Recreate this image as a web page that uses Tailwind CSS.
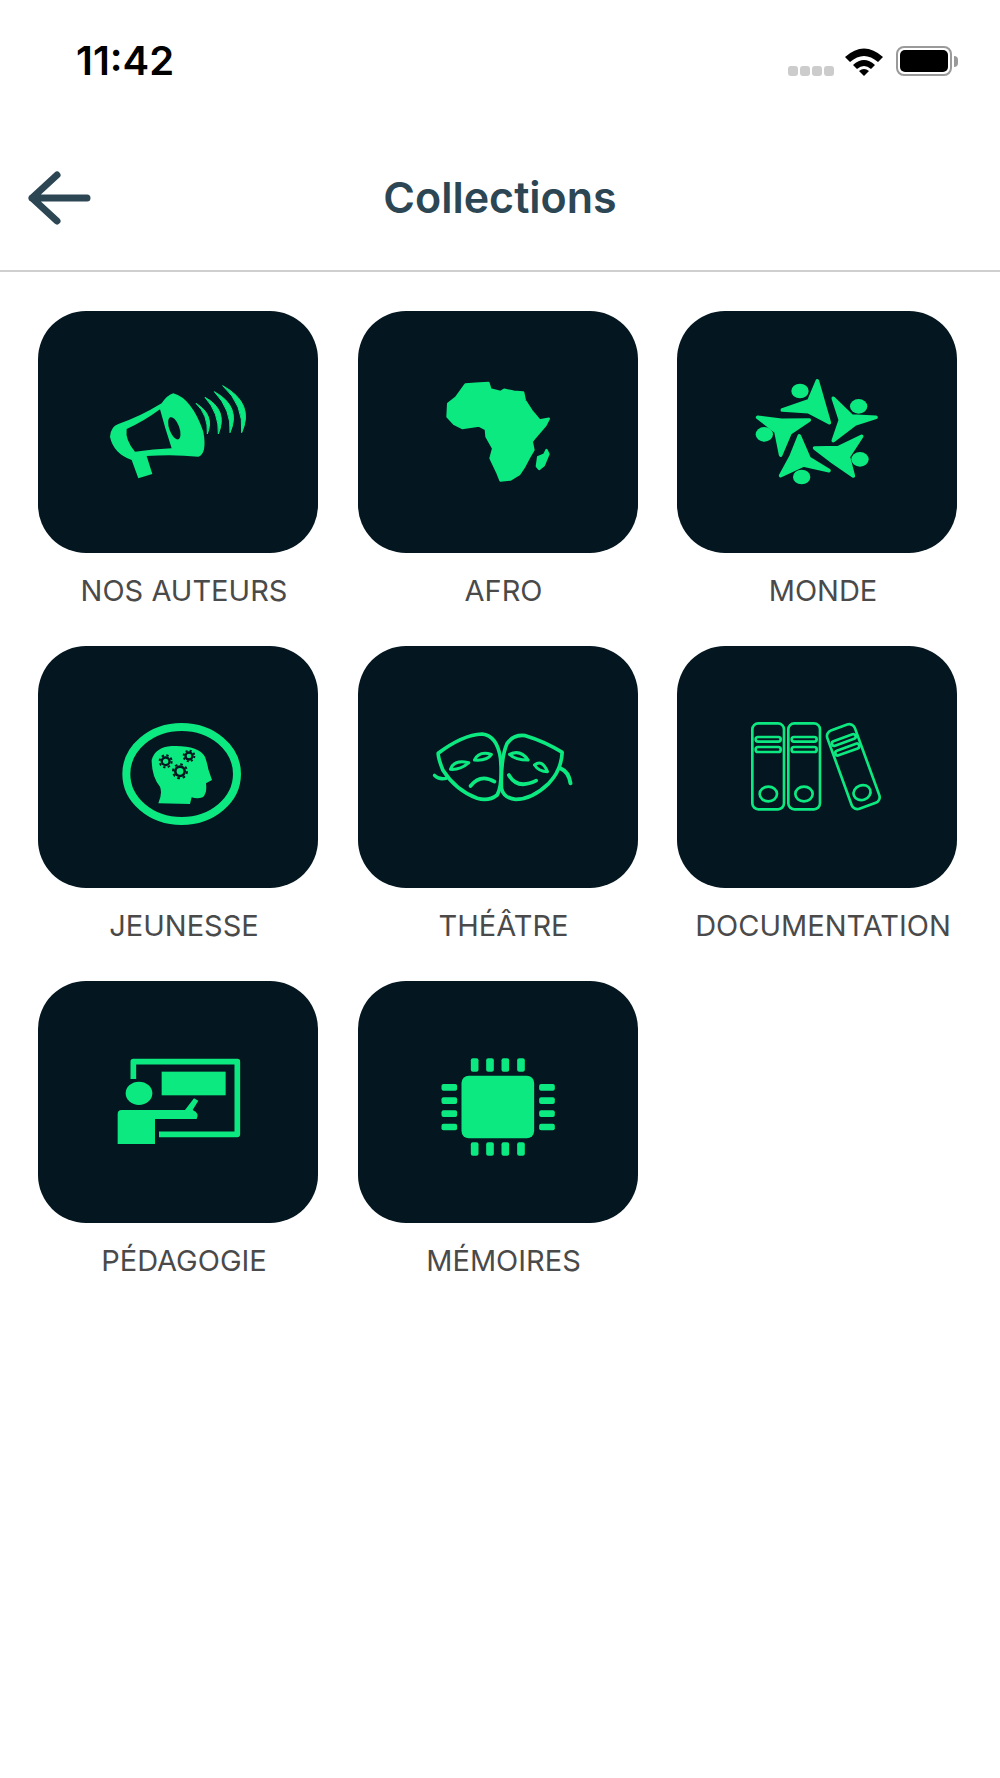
<!DOCTYPE html>
<html lang="fr">
<head>
    <meta charset="UTF-8">
    <meta name="viewport" content="width=device-width, initial-scale=1.0">
    <title>Collections</title>
    <script src="https://cdn.jsdelivr.net/npm/@tailwindcss/browser@4"></script>
</head>
<body class="bg-white font-['Inter',sans-serif]">
<div class="w-[1000px] h-[1778px] bg-white overflow-hidden">

    <!-- status bar -->
    <div class="h-[110px] flex justify-between pl-[76px] pr-[42px] pt-[36px]">
        <span class="text-[40px] leading-[50px] font-semibold text-black">11:42</span>
        <div class="flex items-start h-[40px] pt-[10px]">
            <div class="flex gap-[2px] mt-[20px] mr-[10px]">
                <span class="w-[10px] h-[10px] rounded-[3px] bg-[#cccccc]"></span>
                <span class="w-[10px] h-[10px] rounded-[3px] bg-[#cccccc]"></span>
                <span class="w-[10px] h-[10px] rounded-[3px] bg-[#cccccc]"></span>
                <span class="w-[10px] h-[10px] rounded-[3px] bg-[#cccccc]"></span>
            </div>
            <svg class="w-[40px] h-[30px] mr-[12px]" viewBox="0 0 40 30">
                <path d="M1,11 Q20,-6 39,11 L34,16 Q20,4 6,16 Z" fill="#000"/>
                <path d="M9,19 Q20,9 31,19 L27,23 Q20,17 13,23 Z" fill="#000"/>
                <path d="M15,25 Q20,21 25,25 L20,30 Z" fill="#000"/>
            </svg>
            <div class="w-[56px] h-[30px] rounded-[8px] border-2 border-[#9a9a9a] p-[2px]">
                <div class="w-full h-full rounded-[5px] bg-black"></div>
            </div>
            <span class="w-[4px] h-[11px] mt-[10px] ml-[2px] rounded-r-full bg-[#9a9a9a]"></span>
        </div>
    </div>

    <!-- header -->
    <div class="h-[162px] grid grid-cols-[1fr_auto_1fr] items-center border-b-2 border-[#cfcfcf] pl-[26px] pt-[13px]">
        <svg class="w-[68px] h-[58px] mt-[3px]" viewBox="0 0 68 58" fill="none" stroke="#2c4654" stroke-width="7" stroke-linecap="round" stroke-linejoin="round">
            <path d="M31,6 L6,29 L31,52 M6,29 H61"/>
        </svg>
        <h1 class="text-[43px] leading-[52px] font-semibold text-[#2c4654] pr-[26px]">Collections</h1>
        <div></div>
    </div>

    <!-- collections grid -->
    <div class="grid grid-cols-[repeat(3,280px)] gap-x-[39.5px] gap-y-[37px] pl-[38px] pt-[39px]">

        <div>
            <div class="h-[242px] rounded-[48px] bg-[#04161f]">
                <svg class="w-full h-full" viewBox="38 311 280 242">
                    <g transform="translate(90 360) scale(.3333)" fill="#0de981">
                        <path fill-rule="evenodd" d="M250,100 Q305,115 340,215 Q352,280 325,290 Q250,282 170,288 L187,342 L145,355 L125,300 Q70,280 60,230 Q62,200 85,192 Q150,170 215,130 Q232,105 250,100 Z M110,207 Q105,240 135,275 Q190,268 245,265 Q225,205 210,148 Q160,185 110,207 Z"/>
                        <ellipse cx="253" cy="205" rx="15" ry="35" transform="rotate(-20 253 205)" fill="#04161f"/>
                        <g stroke="#0de981" stroke-width="3" stroke-linejoin="round">
                            <path d="M318,130 Q375,165 352,222 Q355,165 318,130 Z"/>
                            <path d="M345,112 Q415,150 385,222 Q388,160 345,112 Z"/>
                            <path d="M373,95 Q455,140 420,218 Q425,150 373,95 Z"/>
                            <path d="M398,77 Q495,130 455,218 Q462,135 398,77 Z"/>
                        </g>
                    </g>
                </svg>
            </div>
            <p class="mt-[20px] pl-[12px] text-center text-[29px] leading-[36px] text-[#4a4a4a]">NOS AUTEURS</p>
        </div>

        <div>
            <div class="h-[242px] rounded-[48px] bg-[#04161f]">
                <svg class="w-full h-full" viewBox="357.5 311 280 242">
                    <g transform="translate(420 360) scale(.3333)" fill="#0de981" stroke="#0de981" stroke-width="7" stroke-linejoin="round">
                        <path d="M135,73 L165,71 L204,69 L210,88 L240,96 L251,89 L280,95 L308,97 L313,121 L333,152 L357,181 L385,176 L375,196 L343,233 L334,245 L339,270 L325,294 L312,319 L296,343 L269,359 L240,362 L231,339 L210,295 L218,265 L198,230 L196,208 L176,197 L125,204 L101,192 L81,170 L83,131 L107,112 Z"/>
                        <path d="M378,270 L384,282 L370,316 L356,327 L349,319 L353,291 L371,284 Z"/>
                    </g>
                </svg>
            </div>
            <p class="mt-[20px] pl-[12px] text-center text-[29px] leading-[36px] text-[#4a4a4a]">AFRO</p>
        </div>

        <div>
            <div class="h-[242px] rounded-[48px] bg-[#04161f]">
                <svg class="w-full h-full" viewBox="677 311 280 242">
                    <g transform="translate(740 360) scale(.3333)" fill="#0de981" stroke="#0de981" stroke-width="11" stroke-linejoin="round">
                        <path d="M232,63 L268,188 L205,155 L127,150 L207,122 Z"/>
                        <path d="M280,115 L335,168 L408,172 L345,192 L280,242 L301,180 Z"/>
                        <path d="M365,229 L325,290 L340,348 L280,307 L224,264 L295,263 Z"/>
                        <path d="M178,228 L207,295 L267,332 L190,315 L122,347 L153,290 Z"/>
                        <path d="M53,172 L125,181 L208,180 L150,219 L122,285 L108,215 Z"/>
                        <g stroke="none">
                            <ellipse cx="180" cy="93" rx="26" ry="22"/>
                            <ellipse cx="356" cy="139" rx="26" ry="22"/>
                            <ellipse cx="360" cy="298" rx="26" ry="22"/>
                            <ellipse cx="185" cy="351" rx="26" ry="22"/>
                            <ellipse cx="73" cy="223" rx="26" ry="22"/>
                        </g>
                    </g>
                </svg>
            </div>
            <p class="mt-[20px] pl-[12px] text-center text-[29px] leading-[36px] text-[#4a4a4a]">MONDE</p>
        </div>

        <div>
            <div class="h-[242px] rounded-[48px] bg-[#04161f]">
                <svg class="w-full h-full" viewBox="38 646 280 242">
                    <g transform="translate(110 710) scale(.3333)" fill="#0de981">
                        <ellipse cx="215" cy="192" rx="166" ry="141" fill="none" stroke="#0de981" stroke-width="24"/>
                        <path d="M145,280 Q158,250 150,230 Q125,200 125,150 Q135,112 185,108 Q265,105 285,140 Q292,160 295,178 L306,210 L288,220 Q292,250 278,262 Q262,268 245,262 L240,282 Z"/>
                        <g fill="#04161f">
                            <circle cx="167" cy="154" r="15"/>
                            <circle cx="237" cy="138" r="14"/>
                            <circle cx="210" cy="184" r="18"/>
                        </g>
                        <g fill="none" stroke="#04161f" stroke-width="6">
                            <circle cx="167" cy="154" r="18" stroke-dasharray="7 7.1"/>
                            <circle cx="237" cy="138" r="16" stroke-dasharray="6 6.6"/>
                            <circle cx="210" cy="184" r="21" stroke-dasharray="8 8.5"/>
                        </g>
                        <circle cx="167" cy="154" r="8"/>
                        <circle cx="237" cy="138" r="7"/>
                        <circle cx="210" cy="184" r="10"/>
                    </g>
                </svg>
            </div>
            <p class="mt-[20px] pl-[12px] text-center text-[29px] leading-[36px] text-[#4a4a4a]">JEUNESSE</p>
        </div>

        <div>
            <div class="h-[242px] rounded-[48px] bg-[#04161f]">
                <svg class="w-full h-full" viewBox="357.5 646 280 242">
                    <g transform="translate(425 715) scale(.3333)" fill="none" stroke="#0de981" stroke-width="11" stroke-linecap="round" stroke-linejoin="round">
                        <path d="M38,115 Q110,60 170,57 Q215,62 225,130 Q232,210 215,240 Q190,260 155,250 Q90,225 52,165 Q38,130 38,115 Z"/>
                        <path d="M245,85 Q265,57 300,62 Q360,80 410,112 Q408,165 370,205 Q320,253 270,253 Q235,250 228,220 Q225,130 245,85 Z"/>
                        <path d="M27,181 Q40,195 62,190" stroke-width="10"/>
                        <path d="M405,160 Q430,170 435,205" stroke-width="12"/>
                        <g stroke-width="9">
                            <path d="M75,163 Q85,132 130,143 Q105,165 75,163 Z"/>
                            <path d="M147,135 Q160,107 198,118 Q185,138 147,135 Z"/>
                            <path d="M252,118 Q285,102 308,135 Q270,135 252,118 Z"/>
                            <path d="M327,150 Q350,132 366,170 Q340,170 327,150 Z"/>
                        </g>
                        <path d="M135,213 Q165,175 207,200" stroke-width="11"/>
                        <path d="M250,180 Q275,225 332,197" stroke-width="11"/>
                    </g>
                </svg>
            </div>
            <p class="mt-[20px] pl-[12px] text-center text-[29px] leading-[36px] text-[#4a4a4a]">THÉÂTRE</p>
        </div>

        <div>
            <div class="h-[242px] rounded-[48px] bg-[#04161f]">
                <svg class="w-full h-full" viewBox="677 646 280 242">
                    <g transform="translate(740 710) scale(.3333)" fill="none" stroke="#0de981" stroke-width="8">
                        <rect x="37" y="40" width="95" height="258" rx="18"/>
                        <rect x="47" y="81" width="75" height="14" rx="7"/>
                        <rect x="47" y="111" width="75" height="15" rx="7"/>
                        <ellipse cx="85" cy="252" rx="26" ry="22"/>
                        <rect x="145" y="40" width="95" height="258" rx="18"/>
                        <rect x="155" y="81" width="75" height="14" rx="7"/>
                        <rect x="155" y="111" width="75" height="15" rx="7"/>
                        <ellipse cx="192" cy="252" rx="26" ry="22"/>
                        <g transform="rotate(-20 340 170)">
                            <rect x="296" y="45" width="88" height="250" rx="18"/>
                            <rect x="303" y="78" width="75" height="14" rx="7"/>
                            <rect x="303" y="108" width="75" height="15" rx="7"/>
                            <ellipse cx="338" cy="252" rx="26" ry="22"/>
                        </g>
                    </g>
                </svg>
            </div>
            <p class="mt-[20px] pl-[12px] text-center text-[29px] leading-[36px] text-[#4a4a4a]">DOCUMENTATION</p>
        </div>

        <div>
            <div class="h-[242px] rounded-[48px] bg-[#04161f]">
                <svg class="w-full h-full" viewBox="38 981 280 242">
                    <g transform="translate(105 1045) scale(.3333)" fill="#0de981">
                        <path d="M85,102 V50 H397 V268 H162" fill="none" stroke="#0de981" stroke-width="17" stroke-linejoin="round"/>
                        <rect x="170" y="80" width="192" height="71"/>
                        <ellipse cx="102" cy="145" rx="40" ry="35"/>
                        <path d="M50,195 H240 L267,160 L280,167 L263,195 Q285,205 275,222 H150 V297 H38 V207 Q38,195 50,195 Z"/>
                    </g>
                </svg>
            </div>
            <p class="mt-[20px] pl-[12px] text-center text-[29px] leading-[36px] text-[#4a4a4a]">PÉDAGOGIE</p>
        </div>

        <div>
            <div class="h-[242px] rounded-[48px] bg-[#04161f]">
                <svg class="w-full h-full" viewBox="357.5 981 280 242">
                    <g transform="translate(430 1045) scale(.3333)" fill="#0de981">
                        <rect x="93" y="92" width="218" height="188" rx="22"/>
                        <rect x="121" y="40" width="23" height="40" rx="6"/>
                        <rect x="167" y="40" width="23" height="40" rx="6"/>
                        <rect x="213" y="40" width="23" height="40" rx="6"/>
                        <rect x="260" y="40" width="23" height="40" rx="6"/>
                        <rect x="121" y="292" width="23" height="40" rx="6"/>
                        <rect x="167" y="292" width="23" height="40" rx="6"/>
                        <rect x="213" y="292" width="23" height="40" rx="6"/>
                        <rect x="260" y="292" width="23" height="40" rx="6"/>
                        <rect x="33" y="117" width="47" height="20" rx="6"/>
                        <rect x="33" y="157" width="47" height="20" rx="6"/>
                        <rect x="33" y="196" width="47" height="20" rx="6"/>
                        <rect x="33" y="236" width="47" height="20" rx="6"/>
                        <rect x="326" y="117" width="47" height="20" rx="6"/>
                        <rect x="326" y="157" width="47" height="20" rx="6"/>
                        <rect x="326" y="196" width="47" height="20" rx="6"/>
                        <rect x="326" y="236" width="47" height="20" rx="6"/>
                    </g>
                </svg>
            </div>
            <p class="mt-[20px] pl-[12px] text-center text-[29px] leading-[36px] text-[#4a4a4a]">MÉMOIRES</p>
        </div>

    </div>
</div>
</body>
</html>
